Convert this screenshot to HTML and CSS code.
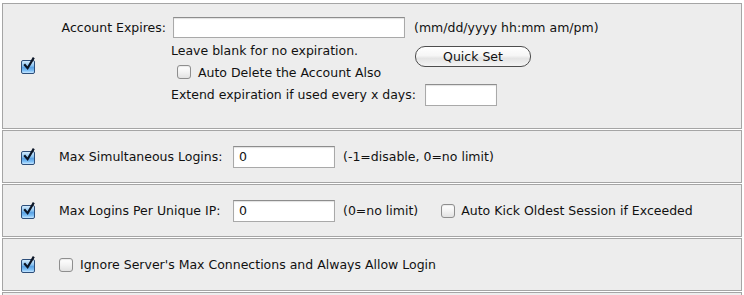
FILE: index.html
```html
<!DOCTYPE html>
<html lang="en">
<head>
    <meta charset="UTF-8">
    <title>Account Limits</title>
    <link rel="stylesheet" href="styles.css">
</head>
<body>
    <div class="panels">

        <!-- Expiration -->
        <div class="panel">
            <div class="check-cell">
                <span class="cb cb-on"><svg class="tick" width="13" height="14" viewBox="0 0 13 14"><path d="M2.2 7.2 L5.6 11.2 L11.8 0.6" fill="none" stroke="#0b1526" stroke-width="2.2"/></svg></span>
            </div>
            <div class="expire-grid">
                <span class="lbl">Account Expires:</span>
                <input type="text" class="field field-date">
                <span class="hint">(mm/dd/yyyy hh:mm am/pm)</span>
                <span class="note">Leave blank for no expiration.</span>
                <button class="quick">Quick Set</button>
                <label class="sub-check"><span class="cb cb-off"></span>Auto Delete the Account Also</label>
                <div class="extend">Extend expiration if used every x days: <input type="text" class="field field-days"></div>
            </div>
        </div>

        <!-- Simultaneous logins -->
        <div class="panel panel-row">
            <div class="check-cell">
                <span class="cb cb-on"><svg class="tick" width="13" height="14" viewBox="0 0 13 14"><path d="M2.2 7.2 L5.6 11.2 L11.8 0.6" fill="none" stroke="#0b1526" stroke-width="2.2"/></svg></span>
            </div>
            <span class="row-label">Max Simultaneous Logins:</span>
            <input type="text" class="field field-num" value="0">
            <span class="row-hint">(-1=disable, 0=no limit)</span>
        </div>

        <!-- Per IP -->
        <div class="panel panel-row">
            <div class="check-cell">
                <span class="cb cb-on"><svg class="tick" width="13" height="14" viewBox="0 0 13 14"><path d="M2.2 7.2 L5.6 11.2 L11.8 0.6" fill="none" stroke="#0b1526" stroke-width="2.2"/></svg></span>
            </div>
            <span class="row-label">Max Logins Per Unique IP:</span>
            <input type="text" class="field field-num" value="0">
            <span class="row-hint">(0=no limit)</span>
            <label class="kick"><span class="cb cb-off"></span>Auto Kick Oldest Session if Exceeded</label>
        </div>

        <!-- Ignore max connections -->
        <div class="panel panel-row">
            <div class="check-cell">
                <span class="cb cb-on"><svg class="tick" width="13" height="14" viewBox="0 0 13 14"><path d="M2.2 7.2 L5.6 11.2 L11.8 0.6" fill="none" stroke="#0b1526" stroke-width="2.2"/></svg></span>
            </div>
            <label class="plain-check"><span class="cb cb-off"></span>Ignore Server's Max Connections and Always Allow Login</label>
        </div>

        <div class="panel panel-row"></div>
    </div>
</body>
</html>
```

FILE: styles.css
```css
/* Basic Styles */
body {
    margin: 0;
    padding: 0;
    background: #ffffff;
    font-family: 'DejaVu Sans', sans-serif;
    font-size: 12.5px;
    color: #111111;
    overflow: hidden;
}

.panels {
    display: flex;
    flex-direction: column;
    gap: 1px;
    width: 740px;
    padding: 3px 0 0 2px;
}

/* Panel boxes */
.panel {
    display: flex;
    align-items: center;
    border: 1px solid #a5a5a5;
    background-color: #ededed;
}

.panel-row {
    height: 53px;
    box-sizing: border-box;
}

.check-cell {
    width: 56px;
    flex: none;
    padding-left: 18px;
    box-sizing: border-box;
    display: flex;
    align-items: center;
}

/* Checkboxes */
.cb {
    display: inline-block;
    flex: none;
    box-sizing: border-box;
}

.cb-on {
    position: relative;
    width: 14px;
    height: 14px;
    border: 1px solid #2d4e7a;
    border-radius: 2px;
    background: linear-gradient(#d3ebfd 0%, #8cc4f1 40%, #5aa2e4 55%, #7fc0f6 80%, #c6e6ff 100%);
    margin-top: 2px;
}

.tick {
    position: absolute;
    left: 0;
    top: -4px;
}

.cb-off {
    width: 14px;
    height: 14px;
    border: 1px solid #8e8e8e;
    border-radius: 3px;
    background: linear-gradient(#ffffff 0%, #f3f3f3 50%, #e2e2e2 100%);
    box-shadow: inset 0 1px 1px rgba(0, 0, 0, 0.08);
}

/* Text fields */
.field {
    box-sizing: border-box;
    border: 1px solid #a9a9a9;
    border-top-color: #8d8d8d;
    background: #ffffff;
    box-shadow: inset 0 1px 1px rgba(0, 0, 0, 0.12);
    font-family: inherit;
    font-size: 12.5px;
    color: #111111;
    padding: 0 5px;
    margin: 0;
    outline: none;
}

/* Expiration panel */
.expire-grid {
    display: grid;
    grid-template-columns: 112px 243px auto;
    grid-template-rows: 21px 20px 20px 21px;
    row-gap: 2px;
    padding: 13px 0 23px;
}

.lbl {
    grid-column: 1;
    grid-row: 1;
    align-self: center;
    text-align: right;
    padding-right: 5px;
}

.field-date {
    grid-column: 2;
    grid-row: 1;
    width: 232px;
    height: 21px;
    margin-left: 2px;
}

.hint {
    grid-column: 3;
    grid-row: 1;
    align-self: center;
}

.note {
    grid-column: 2;
    grid-row: 2;
    align-self: center;
}

.quick {
    grid-column: 3;
    grid-row: 2 / 4;
    align-self: start;
    justify-self: start;
    width: 116px;
    height: 21px;
    margin: 6px 0 0 1px;
    border: 1px solid #4d4d4d;
    border-radius: 10px;
    background: linear-gradient(#ffffff 0%, #f6f6f6 45%, #e4e4e4 60%, #f4f4f4 100%);
    font-family: inherit;
    font-size: 12.5px;
    color: #111111;
    padding: 0;
}

.sub-check {
    grid-column: 2;
    grid-row: 3;
    display: flex;
    align-items: center;
    gap: 7px;
    padding-left: 6px;
}

.extend {
    grid-column: 2 / 4;
    grid-row: 4;
    display: flex;
    align-items: center;
    gap: 9px;
}

.field-days {
    width: 72px;
    height: 22px;
}

/* Single line panels */
.row-label {
    width: 174px;
    flex: none;
}

.field-num {
    width: 102px;
    height: 22px;
}

.row-hint {
    margin-left: 8px;
}

.kick {
    display: flex;
    align-items: center;
    gap: 6px;
    margin-left: 23px;
}

.plain-check {
    display: flex;
    align-items: center;
    gap: 7px;
}
```
